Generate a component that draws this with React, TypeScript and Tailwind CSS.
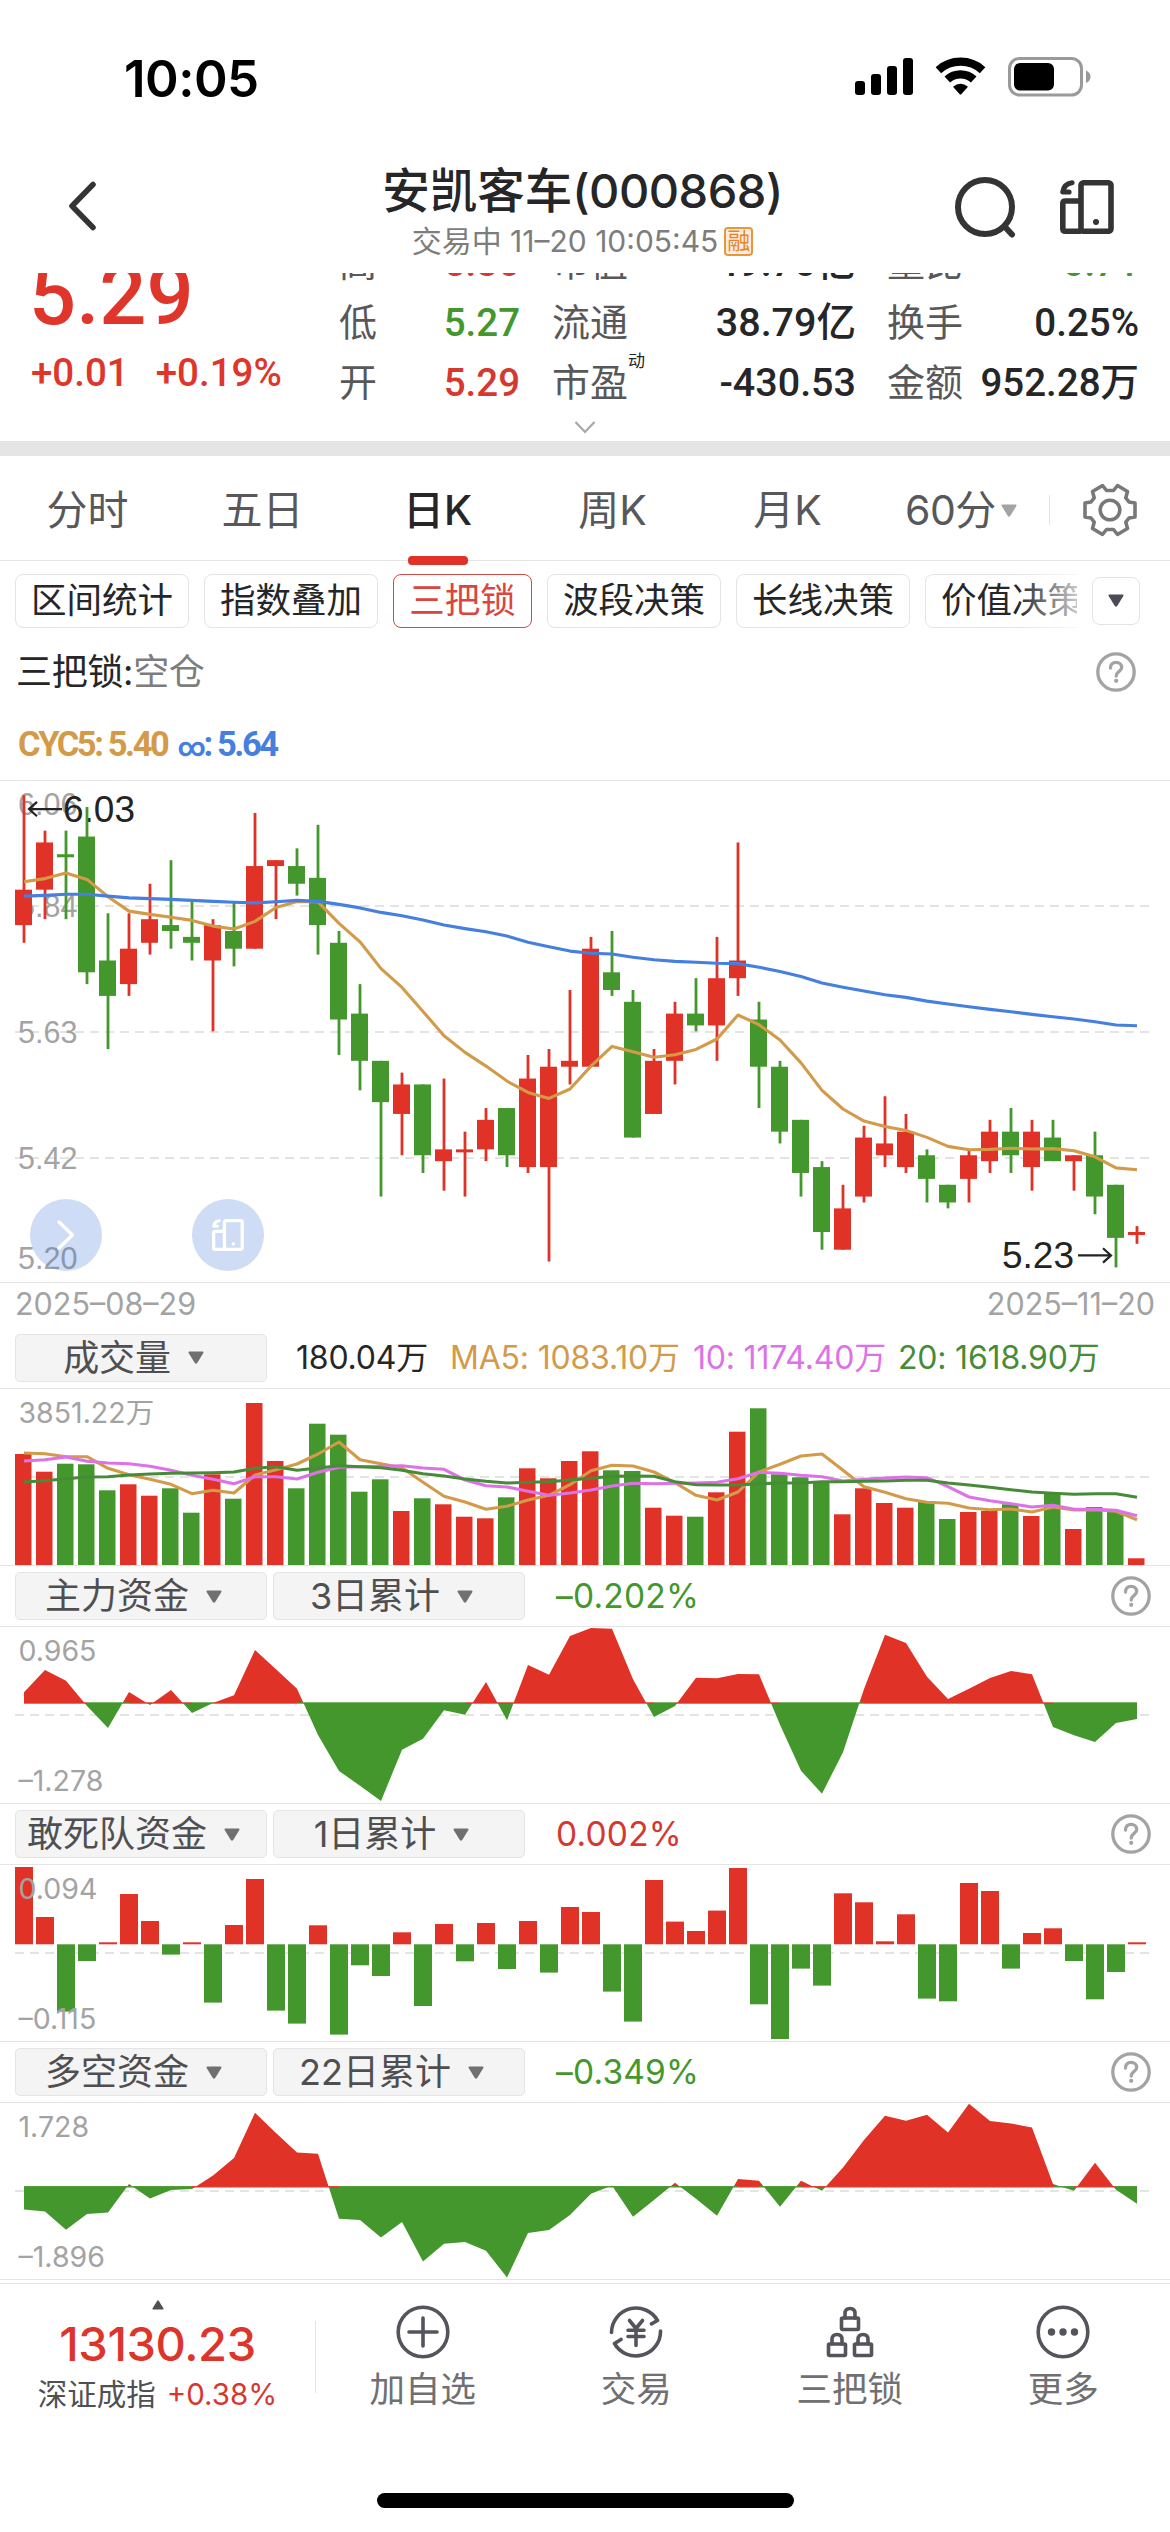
import React from 'react';

const UP = '#e13228';
const DOWN = '#44972c';
const ORANGE = '#d39a4a';
const BLUE = '#457fe0';
const PINK = '#dd72e8';
const STEP = 21;
const START = 24;

type Candle = [dir: number, high: number, top: number, bottom: number, low: number];

// prices in cents
const candles: Candle[] = [
  [1, 603, 587, 581, 578], [1, 597, 595, 587, 582], [0, 597, 593, 593, 582], [0, 601, 596, 573, 571],
  [0, 583, 575, 569, 560], [1, 583, 577, 571, 569], [1, 588, 582, 578, 576], [0, 592, 581, 580, 577],
  [0, 585, 579, 578, 575], [1, 582, 581, 575, 563], [0, 585, 580, 577, 574], [1, 600, 591, 577, 577],
  [1, 592, 592, 591, 582], [0, 594, 591, 588, 586], [0, 598, 589, 581, 576], [0, 580, 578, 565, 559],
  [0, 571, 566, 558, 553], [0, 558, 558, 551, 535], [1, 556, 554, 549, 542], [0, 554, 554, 542, 539],
  [1, 555, 543, 541, 536], [1, 546, 543, 543, 535], [1, 550, 548, 543, 541], [0, 550, 550, 542, 540],
  [1, 559, 555, 540, 539], [1, 560, 557, 540, 524], [1, 570, 558, 557, 554], [1, 579, 577, 557, 557],
  [0, 580, 573, 570, 569], [0, 570, 568, 545, 545], [1, 560, 558, 549, 549], [1, 568, 566, 558, 554],
  [0, 572, 566, 564, 563], [1, 579, 572, 564, 558], [1, 595, 575, 572, 569], [0, 568, 565, 557, 550],
  [0, 558, 557, 546, 544], [0, 548, 548, 539, 535], [0, 541, 540, 529, 526], [1, 537, 533, 526, 526],
  [1, 547, 545, 535, 534], [1, 552, 544, 542, 540], [1, 549, 546, 540, 539], [0, 543, 542, 538, 534],
  [0, 537, 537, 534, 533], [1, 543, 542, 538, 534], [1, 548, 546, 541, 539], [0, 550, 546, 542, 539],
  [1, 548, 546, 540, 536], [0, 548, 545, 541, 541], [1, 542, 542, 541, 536], [0, 546, 542, 535, 532],
  [0, 537, 537, 528, 523], [1, 530, 529, 529, 527],
];

const cyc5 = [
  101.4, 98.2, 92.5, 99, 116.4, 130.7, 134, 136.8, 140, 145.7, 148.6, 141, 127.1, 121, 121.4, 142.9, 161.4, 188.2,
  207, 231, 255.4, 272, 285.7, 300.7, 312, 318, 308.6, 285.7, 266, 271.4, 276.8, 274.3, 269, 258.6, 234.6, 244.3,
  259.6, 282.5, 310, 328.6, 340.7, 346, 350, 357, 366, 369.3, 369, 367.9, 368.6, 368.2, 370.4, 376.4, 387.5, 389.3,
];
const cycInf = [
  115.7, 115, 113.9, 113.9, 115.7, 117.5, 118.2, 119, 120, 121, 121.8, 122.5, 121.4, 120, 121, 124, 127.5, 132,
  135.4, 139.6, 144.6, 148.2, 151.4, 155.7, 161.8, 166.4, 170.7, 172.9, 173.6, 176.8, 179.3, 181, 181.8, 182.9, 183.2, 186.8,
  191, 196, 202.5, 206.8, 210.7, 214.3, 217, 220.7, 223.6, 226.4, 229, 231.4, 234, 236.4, 238.6, 241.4, 244.6, 245.4,
];

const volumes = [
  112, 94.3, 102.3, 101.7, 75.7, 81.7, 70.3, 77.7, 53.3, 91.7, 67.3, 163, 105, 77.7, 142.3, 131.3, 74.3, 86.7,
  55, 67.7, 61.7, 49.3, 47.7, 68.7, 97.7, 87.7, 105, 114.7, 95.7, 95, 58.3, 50.3, 49.3, 73.7, 134.3, 157.7,
  91.7, 88.7, 84, 51.7, 77.7, 63, 58.3, 64.7, 47, 54, 55, 61.7, 50, 72.3, 37, 59, 55, 7.7,
];
const ma5 = [
  65, 65.7, 68.7, 68.7, 80.3, 86.7, 91.3, 96.3, 105.7, 102.3, 105, 87, 81.7, 76, 66, 54, 71.7, 75.7,
  79.7, 94.3, 108.3, 114, 121.3, 118.3, 112, 107.3, 96.7, 82.7, 77.3, 78, 84, 94.7, 107.3, 112, 104, 84,
  76.3, 68, 66, 82.3, 98.7, 104.3, 110.7, 114.3, 115.3, 120, 121.7, 121, 124, 119, 122, 121.7, 123.3, 131.7,
];
const ma10 = [
  73, 71.7, 69, 73.3, 75, 75.7, 78.3, 82.3, 87.3, 91.3, 95.7, 88.7, 88.7, 91, 84.3, 79.3, 78.7, 78.3,
  77.7, 80, 81.3, 92, 97.7, 99, 103.3, 107.3, 105, 102, 98, 95.3, 95.7, 95.3, 95, 94.3, 90.7, 84.3,
  85.3, 87.3, 88.7, 93, 91.3, 90, 89, 89.7, 98.7, 109, 112.7, 115.7, 119, 117.3, 121.3, 121.3, 122.3, 127.7,
];
const ma20 = [
  94, 92.7, 90.7, 89, 88.7, 87, 86, 85.3, 85, 84.7, 84, 80.3, 78.7, 82.3, 80, 77.7, 78.7, 79.7,
  82.3, 85.7, 88, 91, 93.3, 95, 94.3, 93.7, 92, 90.3, 88.3, 88, 88.3, 93.7, 96.7, 97, 97, 95.7,
  95, 95, 93.7, 93.7, 93.3, 93, 92.3, 92.3, 95, 97, 99.3, 101.7, 104, 105.3, 106.3, 105.7, 105.7, 109.3,
];

const mainFunds = [
  10.7, 33, 22.3, -3, -25, 11, -2, 13, -10, 0, 7.7, 53, 33.7, 14.3, -32, -68, -82.7, -98,
  -46.7, -35.7, -7.3, -11.7, 21, -17.3, 38, 28.3, 67, 75, 74.3, 23.7, -14, -3, 25.3, 24.7, 29, 28.7,
  -21.7, -67.7, -90.7, -49.3, 14, 68.3, 60, 26.3, 4, 14.3, 25, 32, 28.7, -24, -32.3, -39, -20, -16,
];
const squadFunds = [
  77.3, 27.3, -67.3, -16.7, 2, 50.3, 23.3, -10.3, 2, -58.3, 19.3, 65.3, -66.3, -79.3, 19, -90.3, -21, -31.7,
  12, -61.7, 20.3, -17, 21.3, -24.7, 23.3, -28.3, 37.3, 32.3, -47.3, -77.3, 64.3, 22.7, 13.3, 33.7, 76.3, -60,
  -94.7, -24.3, -41.3, 51, 42, 3, 30, -54.3, -57, 61.3, 53.3, -24.3, 11.3, 16, -16.7, -55, -27.7, 2,
];
const longShort = [
  -22.7, -24.7, -43, -27.3, -25.7, 2.7, -11.7, -3.3, -2.3, 11.3, 28.7, 74, 53.7, 34.3, 33, -32, -33.3, -50.7,
  -35.3, -74.7, -57, -55.3, -64, -90.7, -46.3, -43.3, -28.3, -7, 1.3, -30, -13.3, 4, -12, -29, 7.7, 6,
  -20, 6, -4, 19.3, 46.7, 71, 66, 72, 54.3, 83, 65.7, 63.3, 59.3, 2.7, -4, 24, -3, -17,
];

const xAt = (i: number) => START + i * STEP;
const toPoints = (ys: number[]) => ys.map((y, i) => `${xAt(i)},${y}`).join(' ');

const Line = ({ data, color }: { data: number[]; color: string }) => (
  <polyline points={toPoints(data)} fill="none" stroke={color} strokeWidth="3.1" strokeLinejoin="round" />
);

const DashLine = ({ y }: { y: number }) => (
  <line x1="15" x2="1149" y1={y} y2={y} stroke="#e4e4e4" strokeWidth="2" strokeDasharray="9 6" />
);

const Label = ({ y, children }: { y: number; children: React.ReactNode }) => (
  <text x="18.5" y={y} fontSize="28.5" fill="#a3a3a3">{children}</text>
);

const KChart = () => {
  const py = (p: number) => 487 - (p - 523) * 5.902;
  return (
    <svg width="1170" height="501" viewBox="0 0.6 1170 501" className="block">
      {[125.6, 251.6, 377.6].map((y) => <DashLine key={y} y={y} />)}
      <g fontFamily="Liberation Sans" fontSize="30.5" fill="#a3a3a3">
        <text x="18" y="34.5">6.06</text>
        <text x="18" y="136.5">5.84</text>
        <text x="18" y="263">5.63</text>
        <text x="18" y="388.5">5.42</text>
        <text x="18" y="489">5.20</text>
      </g>
      <g fontFamily="Liberation Sans" fontSize="37" fill="#232323">
        <text x="63" y="42">6.03</text>
        <text x="1002" y="487.5">5.23</text>
      </g>
      {candles.map(([dir, high, top, bottom, low], i) => {
        const color = dir ? UP : DOWN;
        const h = Math.max(py(bottom) - py(top), 3);
        return (
          <g key={i} fill={color}>
            <rect x={xAt(i) - 1.4} y={py(high)} width="2.8" height={py(low) - py(high)} />
            <rect x={xAt(i) - 9} y={py(top)} width="17" height={h} />
          </g>
        );
      })}
      <Line data={cyc5} color={ORANGE} />
      <Line data={cycInf} color={BLUE} />
      <g fill="none" stroke="#232323" strokeWidth="2.2">
        <path d="M62 28.7H29M37 21.5L29 28.7L37 35.9" />
        <path d="M1078 475H1111M1103 467.8L1111 475L1103 482.2" />
      </g>
    </svg>
  );
};

const VolumeChart = () => (
  <svg width="1170" height="176" viewBox="0 1 1170 176" className="block">
    <DashLine y={89} />
    <Label y={34.5}>3851.22万</Label>
    {volumes.map((v, i) => (
      <rect key={i} x={xAt(i) - 9} y={178 - v} width="16.5" height={v} fill={candles[i][0] ? UP : DOWN} />
    ))}
    <Line data={ma5} color={ORANGE} />
    <Line data={ma10} color={PINK} />
    <Line data={ma20} color="#468c38" />
  </svg>
);

interface FundsProps {
  id: string;
  data: number[];
  zero: number;
  high: string;
  low: string;
}

const AreaChart: React.FC<FundsProps> = ({ id, data, zero, high, low }) => {
  const points = `${START},${zero} ${toPoints(data.map((v) => zero - v))} ${xAt(data.length - 1)},${zero}`;
  return (
    <svg width="1170" height="176" viewBox="0 0.7 1170 176" className="block">
      <clipPath id={`${id}-up`}><rect width="1170" height={zero} /></clipPath>
      <clipPath id={`${id}-down`}><rect y={zero} width="1170" height="120" /></clipPath>
      <DashLine y={88.7} />
      <polygon points={points} fill={UP} clipPath={`url(#${id}-up)`} />
      <polygon points={points} fill={DOWN} clipPath={`url(#${id}-down)`} />
      {data.slice(1).map((v, i) => (
        <rect key={i} x={xAt(i)} y={zero - 0.7} width={STEP} height="1.4" fill={v + data[i] > 0 ? UP : DOWN} />
      ))}
      <Label y={34.7}>{high}</Label>
      <Label y={164.7}>{low}</Label>
    </svg>
  );
};

const BarChart: React.FC<FundsProps> = ({ data, zero, high, low }) => (
  <svg width="1170" height="176" viewBox="0 0.7 1170 176" className="block">
    <DashLine y={88.7} />
    {data.map((v, i) => (
      <rect
        key={i}
        x={xAt(i) - 9}
        y={v > 0 ? zero - v : zero}
        width="18"
        height={Math.abs(v)}
        fill={v > 0 ? UP : DOWN}
      />
    ))}
    <Label y={34.7}>{high}</Label>
    <Label y={164.7}>{low}</Label>
  </svg>
);

const Triangle = ({ className }: { className: string }) => (
  <svg viewBox="0 0 16 13" className={className} fill="currentColor">
    <path d="M1.5 0.5H14.5Q16 0.8 15.2 2.2L9.2 12Q8 13.5 6.8 12L0.8 2.2Q0 0.8 1.5 0.5Z" />
  </svg>
);

const HelpIcon = () => (
  <svg viewBox="0 0 40 40" className="h-10 w-10" fill="none" stroke="#a3a3a3" strokeWidth="3.3" strokeLinecap="round">
    <circle cx="20" cy="20" r="18.2" />
    <path d="M14.5 16C14.5 12.4 17 10.3 20 10.3C23.2 10.3 25.7 12.4 25.7 15.4C25.7 19.2 20.2 19.6 20.2 24" />
    <circle cx="20.2" cy="28.8" r="1.1" fill="#a3a3a3" strokeWidth="2" />
  </svg>
);

const RotateIcon = ({ className }: { className: string }) => (
  <svg viewBox="0 0 54 54" className={className} fill="none" stroke="currentColor" strokeWidth="5.6" strokeLinejoin="round">
    <rect x="21" y="2.8" width="30" height="48.4" rx="2.5" />
    <path d="M21 21H5.5Q2.8 21 2.8 23.5V48.5Q2.8 51.2 5.5 51.2H21" />
    <path d="M12 2.8C7 3.5 3.5 7 2.8 12H9" strokeWidth="5.2" strokeLinecap="round" />
    <circle cx="36" cy="42" r="3" fill="currentColor" stroke="none" />
  </svg>
);

const PanelButton = ({ children }: { children: React.ReactNode }) => (
  <button className="mr-[6px] flex h-[48px] w-[252px] items-center justify-center gap-[17px] rounded-[5px] border border-[#e4e4e4] bg-[#f4f4f4] pr-[15px] text-[36px] leading-none text-[#4f4f51]">
    <span className="whitespace-nowrap">{children}</span>
    <Triangle className="h-[13px] w-4 text-[#707072]" />
  </button>
);

interface PanelHeaderProps {
  name: string;
  period: string;
  value: string;
  valueClass: string;
}

const PanelHeader: React.FC<PanelHeaderProps> = ({ name, period, value, valueClass }) => (
  <div className="flex h-[62px] items-center border-y border-[#e4e4e4] pl-[15px] pr-[19px]">
    <PanelButton>{name}</PanelButton>
    <PanelButton>{period}</PanelButton>
    <span className={`ml-[25px] flex-1 text-[33.5px] tracking-[0.2px] ${valueClass}`}>{value}</span>
    <HelpIcon />
  </div>
);

const StatusBar = () => (
  <div className="flex h-[156px] items-center justify-between pl-[124px] pr-[78px]">
    <span className="text-[51px] font-semibold leading-none tracking-[-0.5px] text-black">10:05</span>
    <svg width="238" height="40" viewBox="0 0 238 40" className="mb-[2px]">
      <g>
        <rect x="1" y="24" width="10" height="14" rx="3" />
        <rect x="17" y="17" width="10" height="21" rx="3" />
        <rect x="33" y="9" width="10" height="29" rx="3" />
        <rect x="49" y="1" width="10" height="37" rx="3" />
      </g>
      <g fill="none" stroke="black" strokeWidth="8.2">
        <path d="M84.4 13.2A33 33 0 0 1 128.6 13.2" />
        <path d="M93.3 22.5A19.5 19.5 0 0 1 119.7 22.5" />
      </g>
      <path d="M99 29.8Q106.5 23.5 114 29.8L107.5 37Q106.5 38 105.5 37Z" />
      <rect x="155.5" y="1.5" width="72" height="36.5" rx="10" fill="none" stroke="#9a9a9a" strokeWidth="3" />
      <rect x="160" y="6" width="40" height="27.5" rx="6" />
      <path d="M232 13.5Q236.5 15.5 236.5 19.7Q236.5 24 232 26Z" fill="#9a9a9a" />
    </svg>
  </div>
);

const NavBar = () => (
  <div className="flex h-[117px] justify-between pl-[66px] pr-[56px]">
    <svg width="32" height="52" viewBox="0 0 32 52" className="mt-[24px]" fill="none" stroke="#343436" strokeWidth="5.5" strokeLinecap="round" strokeLinejoin="round">
      <path d="M27 4.5L6 26L27 47.5" />
    </svg>
    <div className="ml-[113px] flex flex-col items-center pt-[8px]">
      <div className="whitespace-nowrap text-[47.5px] font-medium leading-[54px] text-[#262628]">
        安凯客车<span className="text-[47px] tracking-[-0.5px]">(000868)</span>
      </div>
      <div className="mt-[8px] flex items-center text-[30px] leading-[30px] text-[#7d7d7d]">
        <span className="whitespace-nowrap">交易中 11–20 10:05:45</span>
        <span className="ml-[6px] flex h-[29px] w-[29px] items-center justify-center rounded-[4px] border-2 border-[#e8973f] bg-[#fdeedd] text-[23px] leading-none text-[#e8852b]">
          融
        </span>
      </div>
    </div>
    <div className="mt-[20px] flex h-[62px] gap-[44px]">
      <svg width="62" height="62" viewBox="0 0 62 62" fill="none" stroke="#343436" strokeWidth="6" strokeLinecap="round">
        <circle cx="31" cy="31" r="27" />
        <path d="M52 52L58 58.5" />
      </svg>
      <RotateIcon className="mt-[4px] h-[54px] w-[54px] text-[#343436]" />
    </div>
  </div>
);

const quoteRows = [
  { a: '高', av: '5.30', ac: 'text-[#d5382f]', b: '市值', bv: '49.70亿', sup: '', c: '量比', cv: '0.71', cc: 'text-[#44972c]' },
  { a: '低', av: '5.27', ac: 'text-[#44972c]', b: '流通', bv: '38.79亿', sup: '', c: '换手', cv: '0.25%', cc: 'text-[#262628]' },
  { a: '开', av: '5.29', ac: 'text-[#d5382f]', b: '市盈', bv: '-430.53', sup: '动', c: '金额', cv: '952.28万', cc: 'text-[#262628]' },
];

const digits = "font-['Roboto','Noto_Sans_CJK_SC',sans-serif] font-medium";

const QuotePanel = () => (
  <div className="h-[168px] overflow-hidden">
    <div className="-mt-[41px] flex h-[180px]">
      <div className="w-[339px] pl-[29px] text-[#df352b]">
        <div className={`${digits} h-[120px] pt-[22px] text-[83px] leading-[83px]`}>5.29</div>
        <div className={`${digits} flex gap-[27px] pl-[2px] text-[38.5px] leading-[42px]`}>
          <span>+0.01</span>
          <span>+0.19%</span>
        </div>
      </div>
      <div className="text-[38px] leading-[60px] text-[#58585a]">
        {quoteRows.map((r) => (
          <div key={r.a} className="flex h-[60px] whitespace-nowrap">
            <span>{r.a}</span>
            <span className={`${digits} w-[143px] pt-px text-right text-[38.5px] ${r.ac}`}>{r.av}</span>
            <span className="relative ml-[32px]">
              {r.b}
              {r.sup && <span className="absolute -right-[17px] top-0 text-[17px] leading-[18px] text-[#262628]">{r.sup}</span>}
            </span>
            <span className={`${digits} w-[228px] pt-px text-right text-[39.5px] text-[#262628]`}>{r.bv}</span>
            <span className="ml-[31px]">{r.c}</span>
            <span className={`${digits} w-[176px] pt-px text-right text-[38.5px] ${r.cc}`}>{r.cv}</span>
          </div>
        ))}
      </div>
    </div>
    <svg width="22" height="14" viewBox="0 0 22 14" className="mx-auto mt-[8px]" fill="none" stroke="#a8a8a8" strokeWidth="2.2">
      <path d="M1.5 2L11 12L20.5 2" />
    </svg>
  </div>
);

const GearIcon = () => (
  <svg viewBox="0 0 54 54" className="h-[54px] w-[54px]" fill="none" stroke="#78787a" strokeWidth="3.6" strokeLinejoin="round">
    <path d="M9.5 8.5L19.5 2.5L23.5 7.5H30.5L34.5 2.5L44.5 8.5L42.8 14.8L46 19L52 20V34L46 35L42.8 39.2L44.5 45.5L34.5 51.5L30.5 46.5H23.5L19.5 51.5L9.5 45.5L11.2 39.2L8 35L2 34V20L8 19L11.2 14.8Z" />
    <circle cx="27" cy="27" r="9.8" />
  </svg>
);

const tabs = ['分时', '五日', '日K', '周K', '月K'];

const PeriodTabs = () => (
  <div className="flex h-[105px] items-center border-b border-[#e4e4e4] text-[41px] leading-none text-[#58585a]">
    {tabs.map((tab) => (
      <div
        key={tab}
        className={`relative flex h-[105px] w-[175px] items-center justify-center pt-[5px] ${tab === '日K' ? 'font-medium text-[#262628]' : ''}`}
      >
        {tab}
        {tab === '日K' && <span className="absolute -bottom-[4px] left-[58px] h-[9px] w-[60px] rounded-[4px] bg-[#e13228]" />}
      </div>
    ))}
    <div className="flex w-[174px] items-center gap-[5px] pl-[30px] pt-[5px]">
      <span className="tracking-[-0.5px]">60分</span>
      <Triangle className="h-[13px] w-4 text-[#a3a3a3]" />
    </div>
    <div className="flex flex-1 items-center pt-[3px]">
      <span className="h-[30px] w-px bg-[#e4e4e4]" />
      <span className="ml-[33px]"><GearIcon /></span>
    </div>
  </div>
);

const chips = ['区间统计', '指数叠加', '三把锁', '波段决策', '长线决策', '价值决策'];

const ChipRow = () => (
  <div className="flex h-[79px] items-center pl-[15px]">
    <div className="relative flex w-[1062px] gap-[15px] overflow-hidden">
      {chips.map((chip) => (
        <button
          key={chip}
          className={`flex h-[54px] shrink-0 items-center justify-center rounded-lg border text-[35.5px] leading-none ${
            chip === '三把锁' ? 'w-[139px] border-[#cf4b46] text-[#dc453d]' : 'w-[174px] border-[#e4e4e4] text-[#262628]'
          }`}
        >
          {chip}
        </button>
      ))}
      <span className="absolute right-0 top-0 h-[54px] w-[60px] bg-gradient-to-r from-white/0 to-white/75" />
    </div>
    <button className="ml-[15px] flex h-[48px] w-[48px] items-center justify-center rounded-lg border border-[#e4e4e4]">
      <Triangle className="h-[13px] w-4 text-[#4b4b55]" />
    </button>
  </div>
);

const LockMark = ({ x, y }: { x: number; y: number }) => (
  <g transform={`translate(${x} ${y})`}>
    <rect x="1.5" y="11" width="17" height="11.5" rx="1" />
    <path d="M5 11V6.5Q5 1.5 10 1.5Q15 1.5 15 6.5V11" />
  </g>
);

const navItems = [
  {
    label: '加自选',
    icon: (
      <>
        <circle cx="27" cy="27" r="24.8" />
        <path d="M27 13V41M13 27H41" />
      </>
    ),
  },
  {
    label: '交易',
    icon: (
      <>
        <path d="M2.5 27.5A24.6 24.6 0 0 1 48.5 15.5L42.5 18.8" />
        <path d="M51.5 26A24.6 24.6 0 0 1 5.5 38.5L12 34.5" />
        <path d="M20.5 15.5L27 23.5L33.5 15.5M27 23.5V40.5M19 25.2H35M19 31.5H35" />
      </>
    ),
  },
  {
    label: '三把锁',
    icon: (
      <>
        <LockMark x={17} y={2} />
        <LockMark x={4} y={28} />
        <LockMark x={30} y={28} />
      </>
    ),
  },
  {
    label: '更多',
    icon: (
      <>
        <circle cx="27" cy="27" r="24.8" />
        <g fill="#54545c" stroke="none">
          <circle cx="15.5" cy="27" r="3.7" />
          <circle cx="27" cy="27" r="3.7" />
          <circle cx="38.5" cy="27" r="3.7" />
        </g>
      </>
    ),
  },
];

const BottomBar = () => (
  <div className="mt-[3px] flex h-[150px] border-t border-[#e4e4e4]">
    <div className="flex w-[315px] flex-col items-center pt-[16px]">
      <Triangle className="h-[10px] w-[12px] rotate-180 text-[#505052]" />
      <div className="mt-[11px] text-[47px] font-medium leading-[46px] tracking-[-0.4px] text-[#dd352c]">13130.23</div>
      <div className="mt-[9px] flex gap-[11px] whitespace-nowrap text-[29.5px] leading-[36px] text-[#505052]">
        深证成指
        <span className="text-[#d5382f]">+0.38%</span>
      </div>
    </div>
    <span className="mt-[37px] h-[72px] w-px bg-[#e4e4e4]" />
    {navItems.map(({ label, icon }) => (
      <div key={label} className="flex flex-1 flex-col items-center pt-[21px]">
        <svg viewBox="0 0 54 54" className="h-[54px] w-[54px]" fill="none" stroke="#54545c" strokeWidth="3.6" strokeLinecap="round" strokeLinejoin="round">
          {icon}
        </svg>
        <span className="mt-[12px] text-[35.5px] leading-[38px] text-[#707072]">{label}</span>
      </div>
    ))}
  </div>
);

export default function App() {
  return (
    <div className="h-[2532px] w-[1170px] overflow-hidden bg-white font-['Inter','Noto_Sans_CJK_SC',sans-serif]">
      <StatusBar />
      <NavBar />
      <QuotePanel />
      <div className="h-[15px] bg-[#e5e5e5]" />
      <PeriodTabs />
      <ChipRow />

      <div className="flex h-[64px] items-center justify-between pl-4 pr-[34px] text-[36px] leading-none text-[#262628]">
        <span className="tracking-[-0.3px]">三把锁:<span className="text-[#7d7d7d]">空仓</span></span>
        <HelpIcon />
      </div>
      <div className="flex h-[77px] items-center gap-[10px] border-b border-[#e4e4e4] pl-[18px] pt-1 font-['Roboto','Inter',sans-serif] text-[34.5px] font-bold leading-none tracking-[-2.4px]">
        <span className="text-[#d39a4a]">CYC5: 5.40</span>
        <span className="text-[#457fe0]"><span className="text-[27px]">∞</span>: 5.64</span>
      </div>

      <div className="relative border-b border-[#e4e4e4]">
        <KChart />
        <button className="absolute left-[30px] top-[418px] flex h-[72px] w-[72px] items-center justify-center rounded-full bg-[#3c74d8]/25">
          <svg width="18" height="30" viewBox="0 0 18 30" fill="none" stroke="white" strokeWidth="3.4" strokeLinecap="round" strokeLinejoin="round">
            <path d="M2 2L15.5 15L2 28" />
          </svg>
        </button>
        <button className="absolute left-[192px] top-[418px] flex h-[72px] w-[72px] items-center justify-center rounded-full bg-[#3c74d8]/25 text-white">
          <RotateIcon className="h-8 w-8" />
        </button>
      </div>
      <div className="flex h-[44px] items-center justify-between px-[15px] pb-[2px] text-[30.5px] leading-none text-[#a3a3a3]">
        <span>2025–08–29</span>
        <span>2025–11–20</span>
      </div>

      <div className="flex h-[62px] items-center border-b border-[#e4e4e4] pl-[15px] text-[32px] leading-none tracking-[-0.2px]">
        <PanelButton>成交量</PanelButton>
        <span className="ml-[23px] w-[154px] text-[#262628]">180.04万</span>
        <span className="w-[243px] whitespace-nowrap text-[#d39a4a]">MA5: 1083.10万</span>
        <span className="w-[205px] whitespace-nowrap text-[#dd72e8]">10: 1174.40万</span>
        <span className="whitespace-nowrap text-[#468c38]">20: 1618.90万</span>
      </div>
      <VolumeChart />

      <PanelHeader name="主力资金" period="3日累计" value="–0.202%" valueClass="text-[#44972c]" />
      <AreaChart id="main" data={mainFunds} zero={76.7} high="0.965" low="–1.278" />
      <PanelHeader name="敢死队资金" period="1日累计" value="0.002%" valueClass="text-[#d5382f]" />
      <BarChart id="squad" data={squadFunds} zero={80} high="0.094" low="–0.115" />
      <PanelHeader name="多空资金" period="22日累计" value="–0.349%" valueClass="text-[#44972c]" />
      <AreaChart id="ls" data={longShort} zero={84.5} high="1.728" low="–1.896" />
      <div className="border-b border-[#e4e4e4]" />

      <BottomBar />
      <div className="mx-auto mt-[60px] h-[15px] w-[417px] rounded-full bg-black" />
    </div>
  );
}
